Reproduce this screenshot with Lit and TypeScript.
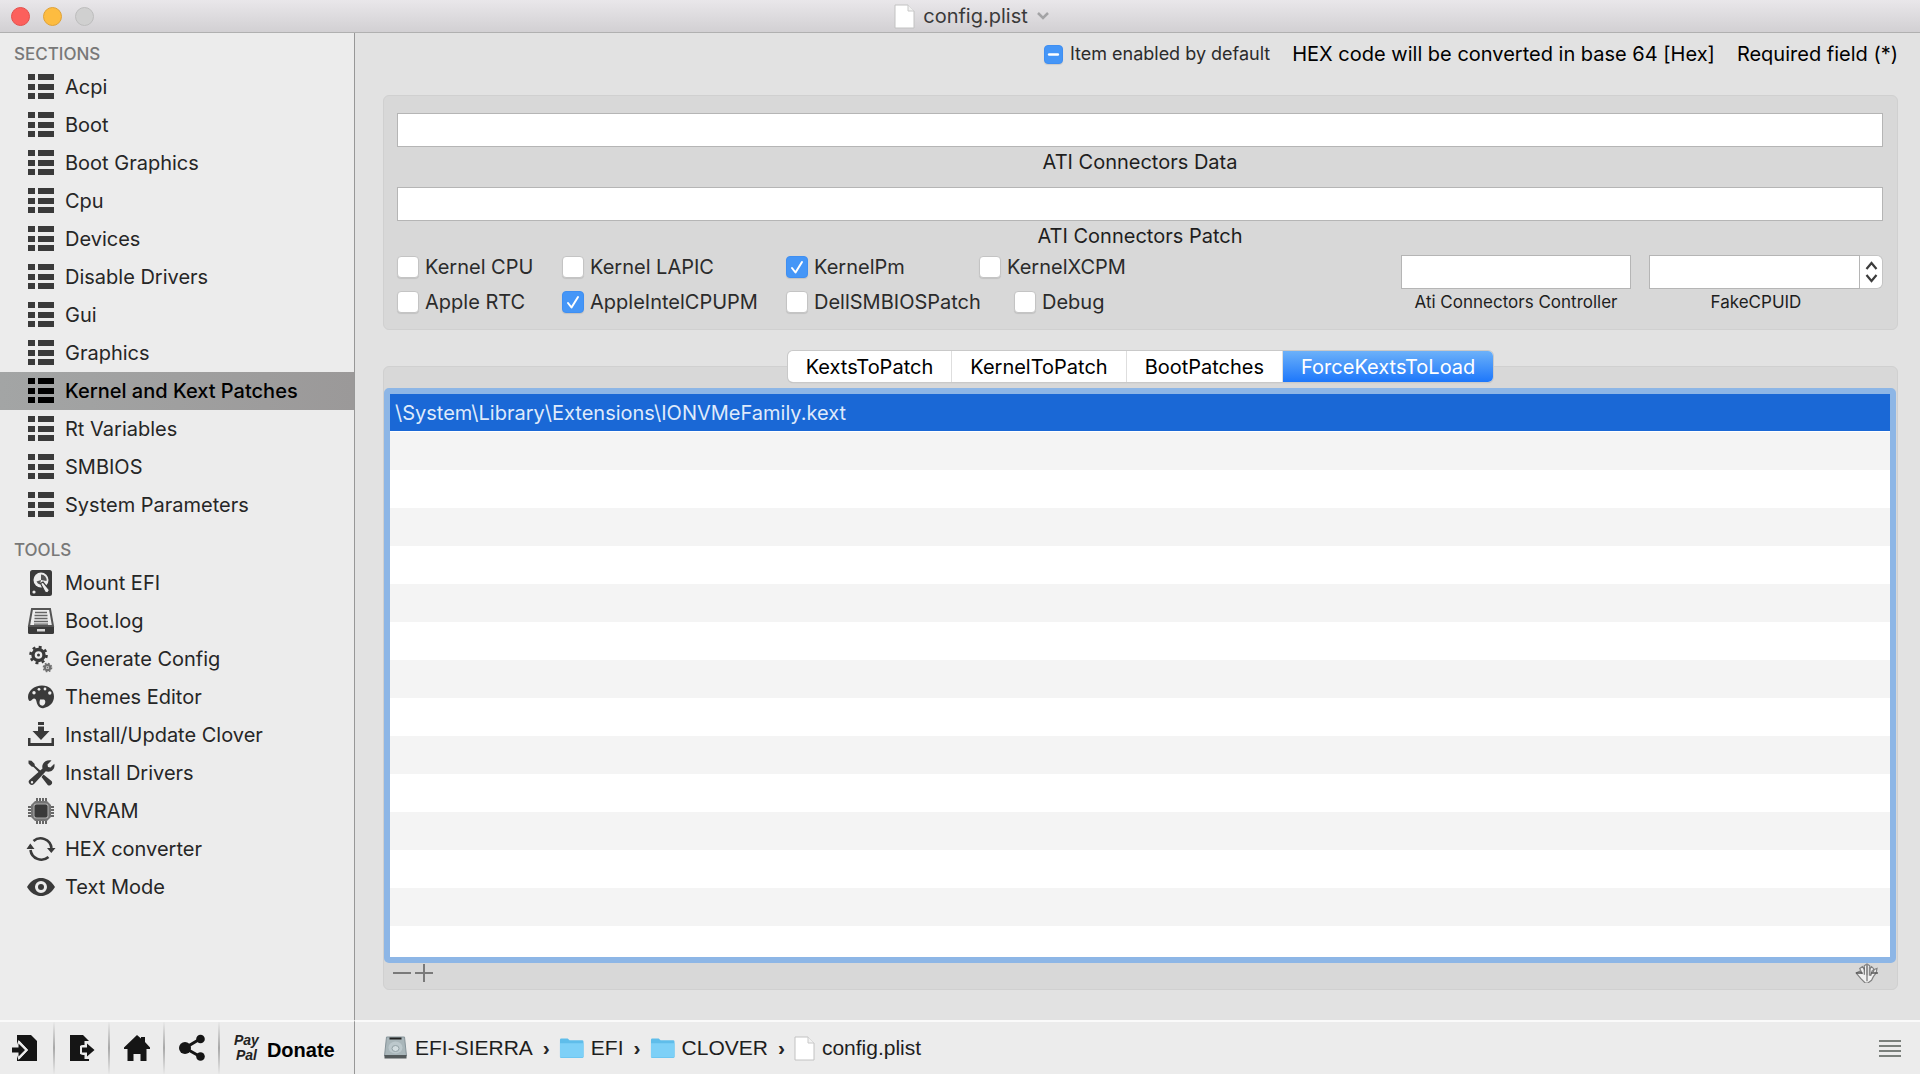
import { LitElement, html, css, svg, nothing } from "lit";
import { customElement, property, state } from "lit/decorators.js";
import { classMap } from "lit/directives/class-map.js";

const ICONS: Record<string, unknown> = {
  list: svg`<path d="M1 1h7v6H1zM11 1h16v6H11zM1 11h7v6H1zM11 11h16v6H11zM1 20h7v6H1zM11 20h16v6H11z"/>`,
  disk: svg`<rect x="3" y="1" width="22" height="26" rx="2.500"/>
    <circle cx="14" cy="11" r="7.500" fill="#ececec"/>
    <path d="M14 11V5.500a5.500 5.500 0 0 1 5.500 6.500zM14 11l-4.500 1.500a5 5 0 0 0 3.500 3z" fill="#555"/>
    <path d="M13.500 14.500l2.500-1.500 6.500 8-2 3-2.500-1z" fill="#ececec" stroke="#3a3a3a" stroke-width="1.200"/>
    <circle cx="7" cy="23" r="1.600" fill="#ececec"/>`,
  bootlog: svg`<path d="M5 2h18l3 17H2z" fill="none" stroke="#555" stroke-width="2"/>
    <path d="M8 5.500h12M7.500 8.500h13M7.500 11.500h13M7 14.500h14M7 17.200h14" stroke="#666" stroke-width="1.300"/>
    <path d="M1 20h26v5.500a1.500 1.500 0 0 1-1.500 1.500h-23A1.500 1.500 0 0 1 1 25.500z"/>
    <path d="M10 22h8v2.500h-8z" fill="#d8d8d8"/>`,
  gears: svg`<circle cx="11.500" cy="10" r="5.500" fill="none" stroke="currentColor" stroke-width="3.400"/>
    <circle cx="11.500" cy="10" r="8" fill="none" stroke="currentColor" stroke-width="2.600" stroke-dasharray="2.900 3.380"/>
    <circle cx="11.500" cy="10" r="1.500"/>
    <circle cx="20.500" cy="22.500" r="2.700" fill="none" stroke="#707070" stroke-width="2.200"/>
    <circle cx="20.500" cy="22.500" r="4.200" fill="none" stroke="#707070" stroke-width="1.300" stroke-dasharray="1.700 1.600"/>
    <circle cx="20.500" cy="22.500" r="1" fill="#707070"/>`,
  palette: svg`<path fill-rule="evenodd" d="M15 2.500C7 2.500 1 8 1 14c0 2 .8 4 2 4 2 0 2-2.500 4-2.500 3 0 2 4 4 7 1.500 2.500 4 3 6 2.500 6-1.500 10-5.500 10-11.500C27 7 22 2.500 15 2.500zM13 16.500h4c1.500.8 1.500 2.500 1 4s-2 2.500-3.500 2-2-1.500-2-3 .5-2 .5-3z"/>
    <g fill="#ececec"><circle cx="7" cy="9.800" r="1.700"/><circle cx="12" cy="6.300" r="1.400"/><circle cx="18" cy="6" r="1.400"/><circle cx="22.800" cy="10" r="1.700"/></g>`,
  install: svg`<path d="M11 1h6v3h-6zM11 5.500h6V10h5.500L14 19 5.500 10H11zM1 17h2.500v5h21v-5H27v8H1z"/>`,
  tools: svg`<path d="M1.500 1.500l3 .3 3 3 .4 2L15 13l-1.700 1.700L6.500 8l-2-.4-3-3zM16.500 15.500l8 6.500a2.800 2.800 0 0 1-3.800 4L14.500 18z"/>
    <path d="M24.500 1.500l-4 4 .5 2.500 2.500.5 3.800-3.800c1 4-1.500 8-6 8-1 0-1.800-.2-2.500-.5L7 25a3 3 0 0 1-4.300 0 3 3 0 0 1 0-4.300L15.500 9.500c-1.300-4.500 3-9.500 9-8zM5 22a1.200 1.200 0 1 0 0 2.400A1.200 1.200 0 0 0 5 22z" fill-rule="evenodd"/>`,
  chip: svg`<path d="M10 1v26M13 1v26M16 1v26M19 1v26M1 10h26M1 13h26M1 16h26M1 19h26" stroke="currentColor" stroke-width="1.500"/>
    <path d="M8 4h12l4 4v12l-4 4H8l-4-4V8z" fill="#747474"/>
    <rect x="6.500" y="6.500" width="15" height="15" rx="2.500" fill="#ababab"/>
    <rect x="7.500" y="7.500" width="13" height="13" rx="2"/>`,
  cycle: svg`<path d="M6.500 6a11 11 0 0 1 18 7M21.500 22a11 11 0 0 1-18-7" fill="none" stroke="currentColor" stroke-width="2.600"/>
    <path d="M20 13h8.500l-4.200 5zM-.5 14h8L3.300 8.500z"/>`,
  eye: svg`<path fill-rule="evenodd" d="M0 14C4 7.500 9 5 14 5s10 2.500 14 9c-4 6.500-9 9-14 9S4 20.500 0 14zm14-6a6 6 0 1 0 0 12 6 6 0 0 0 0-12z"/>
    <circle cx="14" cy="14" r="3"/>`,
  import: svg`<path d="M4 1h14l6 6v20H4z"/>
    <path d="M-2 12h5.500L5.500 6 15 16 5.500 26l-2-6H-2z" fill="#ececec"/>
    <path d="M-1 13.500h6.500V9.500L12 16l-6.500 6.500v-4H-1z"/>
    <path d="M6 7.500L14 16l-8 8.500" fill="none" stroke="#ececec" stroke-width="1.500"/>`,
  export: svg`<path d="M2 1h13l6 6v20H2z"/>
    <path d="M19 7v6.500h-4a2.500 2.500 0 0 0 0 5h4V25" fill="none" stroke="#ececec" stroke-width="5"/>
    <path d="M19 7v6h-4.500a3 3 0 0 0 0 6H19v6l9-9z" fill="#ececec"/>
    <path d="M19 9.500L26.500 16 19 22.500V18.500h-5v-5h5z"/>
    <path d="M2 1h10v25H2z"/>`,
  home: svg`<path d="M14 1l4 3.500V3h4v5l5 5.500V15h-3.500v12h-6v-7h-7v7h-6V15H1v-1.500z"/>`,
  share: svg`<path d="M22 5L7 14l15 8.500" fill="none" stroke="currentColor" stroke-width="3"/>
    <circle cx="22.500" cy="5" r="4.300"/><circle cx="7" cy="14" r="6"/><circle cx="22.500" cy="22.500" r="4.300"/>`,
};

@customElement("app-icon")
export class AppIcon extends LitElement {
  @property() name = "list";

  static styles = css`
    :host { display: block; width: 28px; height: 28px; flex: none; }
    .glyph { display: block; width: 100%; height: 100%; overflow: visible; fill: currentColor; }
  `;

  render() {
    return html`<svg class="glyph" viewBox="0 0 28 28" aria-hidden="true">${ICONS[this.name]}</svg>`;
  }
}

@customElement("check-box")
export class CheckBox extends LitElement {
  @property() label = "";
  @property({ type: Boolean }) checked = false;
  @property({ type: Boolean }) mixed = false;

  static styles = css`
    :host { display: block; }
    .wrap { display: flex; align-items: center; gap: 6px; font-size: 20px; line-height: 24px; color: #2b2b2b; white-space: nowrap; }
    .wrap.small { gap: 7px; font-size: 18px; }
    .box { display: grid; width: 22px; height: 22px; flex: none; }
    .small .box { width: 19px; height: 19px; }
    .input, .mark { grid-area: 1 / 1; width: 100%; height: 100%; }
    .input {
      appearance: none; box-sizing: border-box; margin: 0; background: #fff;
      border: 1px solid #c4c4c4; border-radius: 4px; box-shadow: 0 1px 1px #0000001a;
    }
    .input:checked, .input:indeterminate { background: #4596f7; border-color: #3f8ff2; }
    .mark { fill: none; stroke: #fff; stroke-width: 2; stroke-linecap: round; stroke-linejoin: round; pointer-events: none; z-index: 1; }
    .small .mark { stroke-width: 3; }
  `;

  render() {
    const mark = this.mixed ? svg`<path d="M6 11h10"/>` : this.checked ? svg`<path d="M6 12l3.500 4.500L16 6"/>` : nothing;
    return html`
      <label class=${classMap({ wrap: true, small: this.mixed })}>
        <span class="box">
          <input class="input" type="checkbox" .checked=${this.checked} .indeterminate=${this.mixed}
            @change=${(e: Event) => { this.checked = (e.target as HTMLInputElement).checked; this.mixed = false; }} />
          <svg class="mark" viewBox="0 0 22 22" aria-hidden="true">${mark}</svg>
        </span>
        ${this.label}
      </label>`;
  }
}

const SECTIONS = ["Acpi", "Boot", "Boot Graphics", "Cpu", "Devices", "Disable Drivers", "Gui", "Graphics",
  "Kernel and Kext Patches", "Rt Variables", "SMBIOS", "System Parameters"];

const TOOLS = [
  ["disk", "Mount EFI"], ["bootlog", "Boot.log"], ["gears", "Generate Config"], ["palette", "Themes Editor"],
  ["install", "Install/Update Clover"], ["tools", "Install Drivers"], ["chip", "NVRAM"],
  ["cycle", "HEX converter"], ["eye", "Text Mode"],
];

const TABS = ["KextsToPatch", "KernelToPatch", "BootPatches", "ForceKextsToLoad"];

const page = svg`<path d="M1 1h13l6 6v17H1z" fill="#fff" stroke="#c2c2c2"/><path d="M14 1v6h6" fill="#f2f2f2" stroke="#c8c8c8"/>`;
const pageIcon = html`<svg class="page" viewBox="0 0 21 25" aria-hidden="true">${page}</svg>`;
const folderIcon = html`<svg class="folder" viewBox="0 0 26 24" aria-hidden="true">
  <path d="M1 3.500A1.500 1.500 0 0 1 2.500 2H9l2 2h13a1.500 1.500 0 0 1 1.500 1.500V21a1.500 1.500 0 0 1-1.500 1.500H2.500A1.500 1.500 0 0 1 1 21z" fill="#5fbdea"/>
  <path d="M1 7h24.500v13.500A1.500 1.500 0 0 1 24 22H2.500A1.500 1.500 0 0 1 1 20.500z" fill="#7dd0f7"/></svg>`;
const driveIcon = html`<svg class="drive" viewBox="0 0 24 24" aria-hidden="true">
  <path d="M3 1h18l2 19H1z" fill="#a9b6ba" stroke="#87949a"/><path d="M1 19h22v3.500H1z" fill="#53595b"/>
  <path d="M6 2.500h12" stroke="#222" stroke-width="2"/><ellipse cx="12" cy="11.500" rx="7" ry="6" fill="#bcc8cc"/>
  <ellipse cx="12" cy="12.500" rx="3.500" ry="3" fill="#d3dde0" stroke="#93a1a6"/></svg>`;

@customElement("app-root")
export class AppRoot extends LitElement {
  @state() private section = "Kernel and Kext Patches";
  @state() private tab = "ForceKextsToLoad";

  static styles = css`
    :host {
      display: grid; grid-template: auto minmax(0, 1fr) auto / 355px minmax(0, 1fr);
      height: 100vh; overflow: hidden; background: #e2e2e2;
      font-family: Inter, "Liberation Sans", sans-serif; font-size: 20px; line-height: 24px; color: #262626;
    }
    button { font: inherit; color: inherit; border: 0; padding: 0; margin: 0; background: none; }
    ul { list-style: none; margin: 0; padding: 0; }

    .titlebar {
      grid-column: 1 / -1; box-sizing: border-box; height: 33px; display: grid;
      grid-template-columns: 1fr auto 1fr; align-items: center; padding: 0 11px;
      background: linear-gradient(#e9e7ea, #d2d0d3); border-bottom: 1px solid #b0b0b0;
    }
    .lights { display: flex; gap: 13px; }
    .light { width: 19px; height: 19px; border-radius: 50%; border: 1px solid #bdbdbd; background: #d0d0d0; }
    .light.close { background: #fc605c; border-color: #e4504c; }
    .light.min { background: #fdbc40; border-color: #e0a236; }
    .title { display: flex; align-items: center; gap: 8px; margin: 0; font-size: 20px; font-weight: 400; color: #3a3a3a; padding-left: 24px; }
    .page { width: 21px; height: 25px; flex: none; }
    .chev { width: 14px; height: 10px; }

    .sidebar { background: #ececec; border-right: 1px solid #979797; }
    .head { margin: 0; padding: 9px 14px 2px; font-size: 17px; font-weight: 500; line-height: 24px; color: #787878; }
    .head.tools { padding-top: 14px; }
    .item { width: 100%; height: 38px; display: flex; align-items: center; gap: 10px; padding-left: 27px; text-align: left; white-space: nowrap; }
    .item app-icon { color: #3a3a3a; }
    .item.on, .item.on app-icon { color: #000; }
    .item.on { background: linear-gradient(90deg, #a3a5a5, #9b9999); font-weight: 500; }

    .main { display: flex; flex-direction: column; min-height: 0; padding: 8px 22px 30px 28px; }
    .legend { display: flex; justify-content: flex-end; align-items: center; gap: 22px; height: 26px; color: #000; white-space: nowrap; }
    .panel { background: #d8d8d8; border: 1px solid #d0d0d0; border-radius: 6px; }
    .patches { margin-top: 28px; padding: 17px 14px 15px 13px; display: flex; flex-direction: column; }
    .field { display: flex; flex-direction: column; align-items: center; color: #1e1e1e; }
    .text { box-sizing: border-box; width: 100%; height: 34px; margin: 0; padding: 0 6px; border: 1px solid #b5b5b5; border-radius: 0; background: #fff; font: inherit; outline: none; }
    .field label { padding: 3px 0 13px; }
    .options { display: flex; justify-content: space-between; gap: 20px; margin-top: -6px; }
    .checks { display: grid; grid-template-columns: 165px 224px 193px 35px auto; grid-auto-rows: 24px; row-gap: 11px; }
    .xcpm { grid-column: 4 / 6; }
    .dell { grid-column: 3 / 5; }
    .small { display: flex; gap: 18px; }
    .small .field { width: 230px; }
    .small .field.cpu { width: 234px; }
    .small label { font-size: 17px; line-height: 24px; padding: 1px 0 0; }
    .small .cpu label { padding-right: 20px; }
    .combo { display: flex; width: 100%; }
    .step { flex: none; width: 23px; height: 34px; box-sizing: border-box; background: #fff; border: 1px solid #c4c4c4; border-left: 0; border-radius: 0 6px 6px 0; display: grid; place-items: center; }
    .step svg { width: 13px; height: 22px; }

    .tabs { display: flex; justify-content: center; margin-top: 21px; z-index: 1; }
    .strip { display: flex; border-radius: 5px; background: #fff; box-shadow: 0 0 0 1px #c9c9c9, 0 1px 1px #0003; overflow: hidden; }
    .tab { height: 31px; padding: 0 18px; color: #000; border-right: 1px solid #dedede; }
    .tab:last-child { border-right: 0; }
    .tab.on { color: #fff; background: linear-gradient(#6cb1f9, #1d77fb); }
    .list { flex: 1; min-height: 0; display: flex; flex-direction: column; margin-top: -16px; padding: 21px 1px 0 0; }
    .scroll {
      flex: 1; min-height: 0; overflow: hidden; border: 6px solid #8db6e6; border-radius: 5px;
      background: repeating-linear-gradient(#fff 0 38px, #f4f4f4 38px 76px);
    }
    .kexts { width: 100%; border-collapse: collapse; }
    .kexts td { height: 37px; padding: 0 5px; background: #1a68d6; color: #dfeafb; }
    .foot { display: flex; align-items: flex-start; height: 26px; padding: 0 16px 0 6px; }
    .foot button, .menu { display: grid; place-items: center; }
    .foot svg { width: 23px; height: 20px; display: block; }
    .foot .hand { margin-left: auto; }
    .foot .hand svg { width: 26px; }

    .actions, .path { border-top: 2px solid #fafafa; background: #ececec; height: 52px; display: flex; }
    .actions { border-right: 1px solid #979797; color: #151515; }
    .act { width: 55px; display: grid; place-items: center; border-right: 2px solid; border-image: linear-gradient(#ececec, #a8a8a8, #ececec) 1; }
    .donate { flex: 1; display: flex; align-items: center; gap: 8px; padding: 0 0 0 14px; color: #000; font: bold 20px/24px "Liberation Sans", sans-serif; }
    .pp { font-size: 14px; line-height: 15px; font-style: italic; display: flex; flex-direction: column; color: #222; }
    .word { padding-top: 4px; }
    .path { align-items: center; justify-content: space-between; padding: 0 19px 0 28px; }
    .crumbs { display: flex; align-items: center; font: 21px/24px "Liberation Sans", sans-serif; }
    .crumbs li { display: flex; align-items: center; }
    .crumbs a { display: flex; align-items: center; gap: 7px; color: #1e1e1e; text-decoration: none; }
    .crumbs li + li::before { content: "›"; font-weight: bold; margin: 0 9px 0 10px; }
    .drive, .folder { width: 25px; height: 24px; flex: none; }
    .menu svg { width: 22px; height: 18px; }
  `;

  private item(icon: string, name: string) {
    const on = name === this.section;
    return html`<li><button class=${classMap({ item: true, on })} @click=${() => (this.section = name)}>
      <app-icon name=${icon}></app-icon>${name}</button></li>`;
  }

  render() {
    return html`
      <header class="titlebar">
        <div class="lights">
          <button class="light close" aria-label="Close"></button>
          <button class="light min" aria-label="Minimize"></button>
          <button class="light" aria-label="Zoom" disabled></button>
        </div>
        <h1 class="title">${pageIcon}config.plist
          <svg class="chev" viewBox="0 0 14 10" aria-hidden="true"><path d="M2 2l5 5 5-5" fill="none" stroke="#a3a3a5" stroke-width="2.500"/></svg>
        </h1>
      </header>

      <nav class="sidebar">
        <h2 class="head">SECTIONS</h2>
        <ul>${SECTIONS.map((s) => this.item("list", s))}</ul>
        <h2 class="head tools">TOOLS</h2>
        <ul>${TOOLS.map(([i, n]) => this.item(i, n))}</ul>
      </nav>

      <main class="main">
        <div class="legend">
          <check-box mixed label="Item enabled by default"></check-box>
          <span>HEX code will be converted in base 64 [Hex]</span>
          <span>Required field (*)</span>
        </div>

        <section class="panel patches">
          <div class="field"><input class="text" id="data" type="text" /><label for="data">ATI Connectors Data</label></div>
          <div class="field"><input class="text" id="patch" type="text" /><label for="patch">ATI Connectors Patch</label></div>
          <div class="options">
            <div class="checks">
              <check-box label="Kernel CPU"></check-box>
              <check-box label="Kernel LAPIC"></check-box>
              <check-box checked label="KernelPm"></check-box>
              <check-box class="xcpm" label="KernelXCPM"></check-box>
              <check-box label="Apple RTC"></check-box>
              <check-box checked label="AppleIntelCPUPM"></check-box>
              <check-box class="dell" label="DellSMBIOSPatch"></check-box>
              <check-box label="Debug"></check-box>
            </div>
            <div class="small">
              <div class="field"><input class="text" id="controller" type="text" /><label for="controller">Ati Connectors Controller</label></div>
              <div class="field cpu">
                <div class="combo">
                  <input class="text" id="cpuid" type="text" />
                  <button class="step" aria-label="Choose FakeCPUID">
                    <svg viewBox="0 0 13 22" aria-hidden="true"><path d="M1.500 8l5-6 5 6M1.500 14l5 6 5-6" fill="none" stroke="#3c3c3c" stroke-width="2.200"/></svg>
                  </button>
                </div>
                <label for="cpuid">FakeCPUID</label>
              </div>
            </div>
          </div>
        </section>

        <div class="tabs"><div class="strip" role="tablist">
          ${TABS.map((t) => html`<button role="tab" aria-selected=${t === this.tab} class=${classMap({ tab: true, on: t === this.tab })}
            @click=${() => (this.tab = t)}>${t}</button>`)}
        </div></div>
        <section class="panel list">
          <div class="scroll"><table class="kexts"><tbody><tr><td>\\System\\Library\\Extensions\\IONVMeFamily.kext</td></tr></tbody></table></div>
          <div class="foot">
            <button aria-label="Remove"><svg viewBox="0 0 23 20"><path d="M3 10h18" stroke="#7a7a7a" stroke-width="2"/></svg></button>
            <button aria-label="Add"><svg viewBox="0 0 23 20"><path d="M2 10h18M11 1v18" stroke="#7a7a7a" stroke-width="2"/></svg></button>
            <button class="hand" aria-label="Drag">
              <svg viewBox="0 0 26 22"><path d="M1 11l4-2 3 3-3-6 3-2 2 3V3l3-2 3 2v4l2-3 2 2v4l1-3 3-1-1 5-3 4-2 4-4 3h-3l-5-5z" fill="#f1f1f1" stroke="#808080" stroke-width="1.300"/>
              <path d="M13 2v12M16 4v10" stroke="#8a8a8a" stroke-width="2"/><path d="M13 14v6M10 5v8M19 8l-2 6" stroke="#666" stroke-width="1.200"/><path d="M1 11h7M18 11h7" stroke="#555" stroke-width="1.500"/></svg>
            </button>
          </div>
        </section>
      </main>

      <div class="actions">
        <button class="act" aria-label="Import"><app-icon name="import"></app-icon></button>
        <button class="act" aria-label="Export"><app-icon name="export"></app-icon></button>
        <button class="act" aria-label="Home"><app-icon name="home"></app-icon></button>
        <button class="act" aria-label="Share"><app-icon name="share"></app-icon></button>
        <button class="donate"><span class="pp"><span>Pay</span><span>Pal</span></span><span class="word">Donate</span></button>
      </div>
      <footer class="path">
        <ul class="crumbs">
          <li><a href="#sierra">${driveIcon}EFI-SIERRA</a></li>
          <li><a href="#efi">${folderIcon}EFI</a></li>
          <li><a href="#clover">${folderIcon}CLOVER</a></li>
          <li><a href="#config">${pageIcon}config.plist</a></li>
        </ul>
        <button class="menu" aria-label="Menu"><svg viewBox="0 0 22 18"><path d="M0 2h22M0 7h22M0 12h22M0 17h22" stroke="#7b807c" stroke-width="2"/></svg></button>
      </footer>`;
  }
}
